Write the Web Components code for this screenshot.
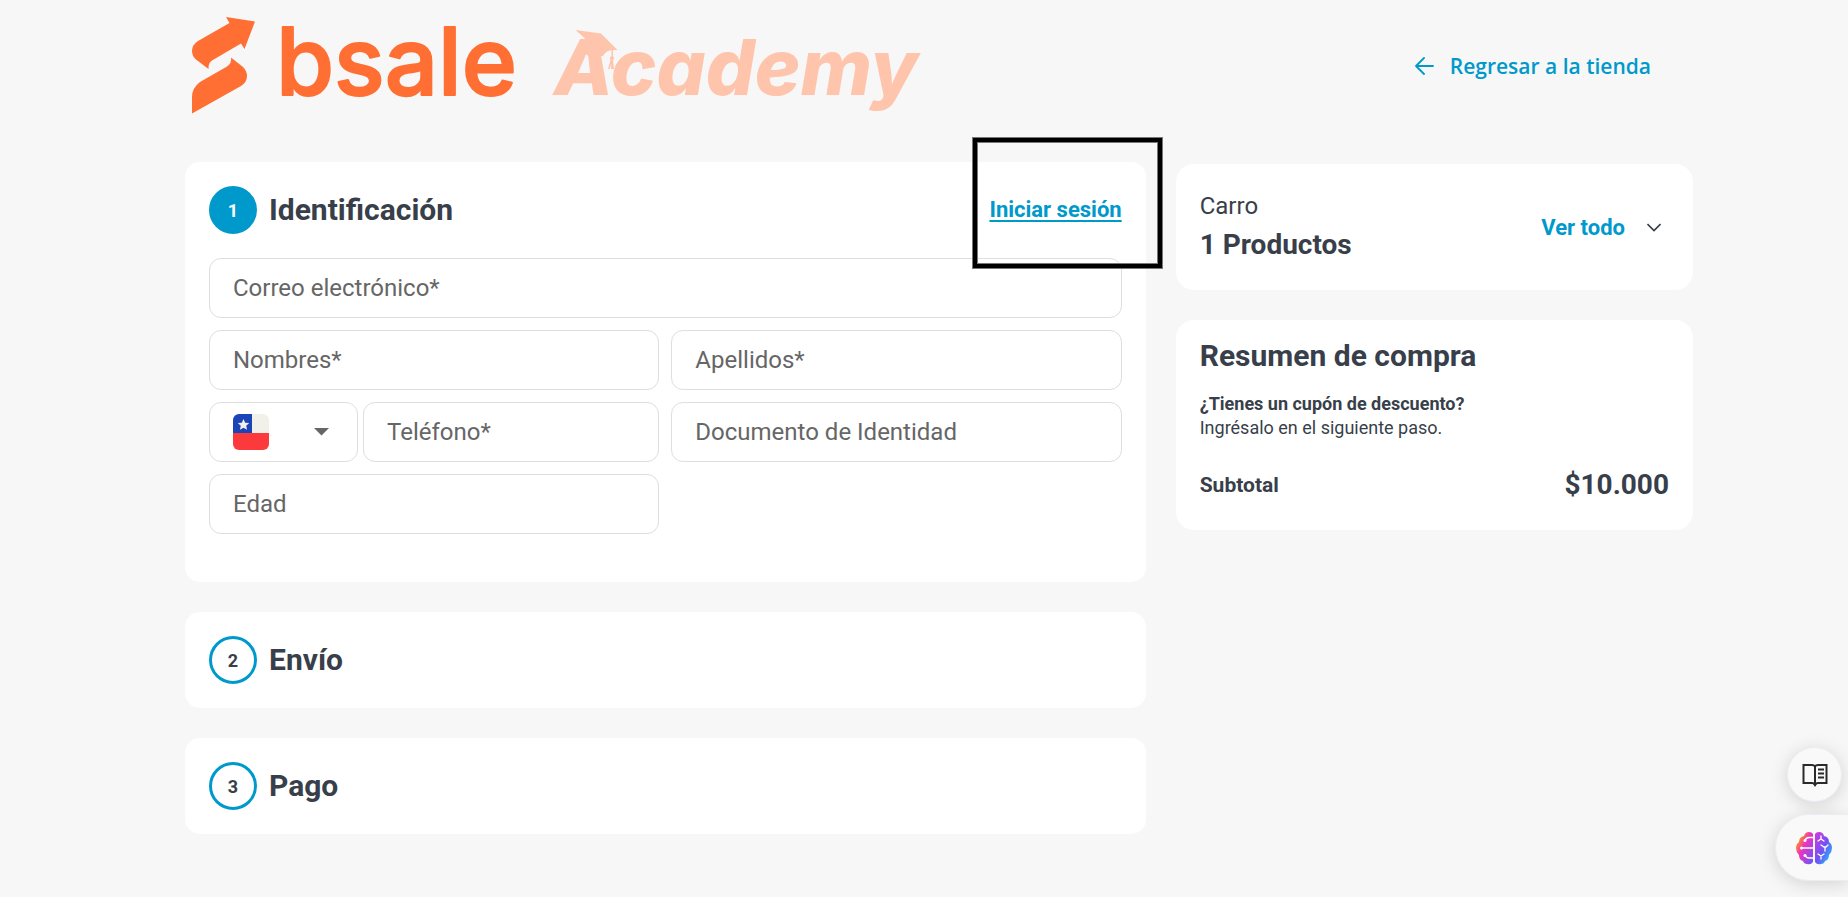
<!DOCTYPE html>
<html lang="es">
<head>
<meta charset="utf-8">
<meta name="viewport" content="width=device-width, initial-scale=1">
<title>Checkout</title>
<style>
:root {
  --accent: #0099cc;
  --ink: #383f4a;
  --muted: #666;
  --line: #dedede;
}

body {
  margin: 0;
  min-height: 100vh;
  background: #f7f7f7;
  color: var(--ink);
  font-family: Roboto, "Liberation Sans", sans-serif;
}
</style>
</head>
<body>
<checkout-page>
  <store-logo slot="brand"></store-logo>
  <back-link slot="back" href="#tienda">Regresar a la tienda</back-link>

  <step-card number="1" heading="Identificación" active>
    <session-link slot="action" href="#login">Iniciar sesión</session-link>
    <field-grid>
      <text-field class="wide" type="email" label="Correo electrónico*"></text-field>
      <text-field label="Nombres*"></text-field>
      <text-field label="Apellidos*"></text-field>
      <phone-field label="Teléfono*"></phone-field>
      <text-field label="Documento de Identidad"></text-field>
      <text-field label="Edad"></text-field>
    </field-grid>
  </step-card>
  <step-card number="2" heading="Envío"></step-card>
  <step-card number="3" heading="Pago"></step-card>

  <cart-card slot="side" count="1"></cart-card>
  <order-summary slot="side" amount="$10.000"></order-summary>
</checkout-page>
<help-dock></help-dock>

<script>
// attaches a shadow root filled with the given markup
function render(el, html) {
  const template = document.createElement('template');
  template.innerHTML = html;
  const shadow = el.attachShadow({ mode: 'open' });
  shadow.appendChild(template.content.cloneNode(true));
  return shadow;
}

class CheckoutPage extends HTMLElement {
  constructor() {
    super();
    render(this, `
<style>
:host {
  display: block;
  padding: 0 155px 60px 185px;
}

header {
  display: flex;
  align-items: center;
  justify-content: space-between;
  padding-right: 42px;
  margin-bottom: 30px;
}

.columns {
  display: grid;
  grid-template-columns: minmax(0, 65fr) minmax(0, 35fr);
  gap: 30px;
  align-items: start;
}

main, aside {
  display: flex;
  flex-direction: column;
  gap: 30px;
}

aside {
  padding-top: 2px;
}

@media (max-width: 1200px) {
  :host { padding: 0 24px 48px; }
  .columns { grid-template-columns: minmax(0, 1fr); }
}
</style>
<header>
  <slot name="brand"></slot>
  <slot name="back"></slot>
</header>
<div class="columns">
  <main><slot></slot></main>
  <aside><slot name="side"></slot></aside>
</div>`);
  }
}

class StoreLogo extends HTMLElement {
  constructor() {
    super();
    render(this, `
<style>
:host { display: block; }
svg { display: block; }
.bsale {
  font: 500 94px Inter, sans-serif;
  fill: #ff6f33;
  stroke: #ff6f33;
  stroke-width: 2;
  stroke-linejoin: round;
}
.academy {
  font: italic 800 77px Inter, sans-serif;
  fill: #ffc4ac;
}
</style>
<svg width="745" height="132" viewBox="185 0 745 132" role="img" aria-label="bsale Academy">
  <g fill="#ff6f33">
    <path d="M226 17 255 21.500 244.500 49 241 43.500 212 60.500Q208 63 208.500 69L196 59.500Q192 56 192 51Q192 45 198 41L229.500 23Z"/>
    <path d="M231 57.500 243 67Q247 71 247 76Q247 82 241 86L192 113.500V97Q192 88 200 82L227 66.500Q232 63 231 57.500Z"/>
  </g>
  <text class="bsale" x="276" y="95">bsale</text>
  <text class="academy" x="554" y="95">Academy</text>
  <g fill="#ffc4ac">
    <path d="M575.500 30 601 33.500 617.500 50H613Q606 50 603 56L590 57 578 49 585 38.500Z"/>
    <path d="M611.500 50H613V56Q615 58 613 60L614 69H611L611.500 64 609.500 69H608L610.500 60Q609 57 611.500 56Z"/>
  </g>
</svg>`);
  }
}

class BackLink extends HTMLElement {
  constructor() {
    super();
    const shadow = render(this, `
<style>
:host { display: block; }
a {
  display: flex;
  align-items: center;
  gap: 16px;
  color: var(--accent);
  font: 600 21px "Open Sans", "Noto Sans", sans-serif;
  text-decoration: none;
  white-space: nowrap;
}
</style>
<a>
  <svg width="19" height="18" viewBox="0 0 19 18" fill="none" stroke="currentColor" stroke-width="1.800" stroke-linecap="round" stroke-linejoin="round" aria-hidden="true">
    <path d="M18 9H1M9 1 1 9l8 8"/>
  </svg>
  <span><slot></slot></span>
</a>`);
    shadow.querySelector('a').href = this.getAttribute('href');
  }
}

class StepCard extends HTMLElement {
  constructor() {
    super();
    const shadow = render(this, `
<style>
:host {
  display: block;
  padding: 24px;
  border-radius: 15px;
  background: #fff;
}

:host([active]) {
  padding-bottom: 48px;
}

.head {
  display: flex;
  align-items: center;
  gap: 12px;
}

.number {
  display: grid;
  place-items: center;
  box-sizing: border-box;
  width: 48px;
  height: 48px;
  border: 3px solid var(--accent);
  border-radius: 50%;
  font-size: 18px;
  font-weight: 700;
}

:host([active]) .number {
  background: var(--accent);
  color: #fff;
}

h2 {
  flex: 1;
  margin: 0;
  font-size: 30px;
  font-weight: 700;
  line-height: 36px;
}
</style>
<div class="head">
  <span class="number"></span>
  <h2></h2>
  <slot name="action"></slot>
</div>
<slot></slot>`);
    shadow.querySelector('.number').textContent = this.getAttribute('number');
    shadow.querySelector('h2').textContent = this.getAttribute('heading');
  }
}

class SessionLink extends HTMLElement {
  constructor() {
    super();
    const shadow = render(this, `
<style>
:host {
  display: block;
  position: relative;
}

a {
  color: var(--accent);
  font-size: 22px;
  font-weight: 700;
  line-height: 26px;
  text-decoration: underline;
  text-underline-offset: 3px;
  text-decoration-thickness: 2px;
}

/* highlight box drawn over the link and the card corner */
.mark {
  position: absolute;
  inset: -59px -40px -45px -16px;
  border: 4px solid #000;
  outline: 1px solid #777;
  box-shadow: inset 0 0 0 1px #777;
  pointer-events: none;
}
</style>
<a><slot></slot></a>
<span class="mark"></span>`);
    shadow.querySelector('a').href = this.getAttribute('href');
  }
}

class FieldGrid extends HTMLElement {
  constructor() {
    super();
    render(this, `
<style>
:host { display: block; }
form {
  display: grid;
  grid-template-columns: minmax(0, 1fr) minmax(0, 1fr);
  gap: 12px;
  margin-top: 24px;
}
::slotted(.wide) { grid-column: 1 / -1; }
</style>
<form><slot></slot></form>`);
  }
}

class TextField extends HTMLElement {
  constructor() {
    super();
    const shadow = render(this, `
<style>
:host {
  display: grid;
  min-width: 0;
}

label, input {
  grid-area: 1 / 1;
}

label {
  align-self: center;
  padding: 0 24px;
  color: var(--muted);
  font-size: 24px;
  line-height: 36px;
  white-space: nowrap;
  overflow: hidden;
  pointer-events: none;
  z-index: 1;
}

input {
  box-sizing: border-box;
  width: 100%;
  height: 60px;
  padding: 0 24px;
  border: 1px solid var(--line);
  border-radius: 12px;
  background: #fff;
  color: var(--ink);
  font: 24px Roboto, sans-serif;
}

input:focus {
  outline: none;
  border-color: var(--accent);
}

/* the label gives way to the typed value */
input:not(:placeholder-shown) + label {
  visibility: hidden;
}
</style>
<input id="field" placeholder=" ">
<label for="field"></label>`);
    shadow.querySelector('input').type = this.getAttribute('type') || 'text';
    shadow.querySelector('label').textContent = this.getAttribute('label');
  }
}

class PhoneField extends HTMLElement {
  constructor() {
    super();
    const shadow = render(this, `
<style>
:host {
  display: grid;
  grid-template-columns: 149px minmax(0, 1fr);
  gap: 5px;
}

.country {
  display: grid;
}

select, .face {
  grid-area: 1 / 1;
}

select {
  appearance: none;
  box-sizing: border-box;
  width: 100%;
  height: 60px;
  border: 1px solid var(--line);
  border-radius: 12px;
  background: #fff;
  cursor: pointer;
}

.face {
  display: flex;
  align-items: center;
  justify-content: space-between;
  padding: 0 29px 0 24px;
  pointer-events: none;
  z-index: 1;
}
</style>
<div class="country">
  <select aria-label="País"><option value="CL" aria-label="Chile"></option></select>
  <div class="face">
    <svg width="36" height="36" viewBox="0 0 36 36" aria-hidden="true">
      <clipPath id="round"><rect width="36" height="36" rx="6"/></clipPath>
      <g clip-path="url(#round)">
        <path fill="#f1f1ea" d="M0 0h36v19H0z"/>
        <path fill="#1a44b8" d="M0 0h19v19H0z"/>
        <path fill="#fc3a3b" d="M0 19h36v17H0z"/>
        <path fill="#f1f1ea" d="m10.500 5 1.700 3.700 4 .4-3 2.700.9 4-3.600-2.100-3.600 2.100.9-4-3-2.700 4-.4z"/>
      </g>
    </svg>
    <svg width="15" height="8" viewBox="0 0 15 8" aria-hidden="true"><path fill="#666" d="M0 0h15L7.500 7.500z"/></svg>
  </div>
</div>
<text-field></text-field>`);
    const field = document.createElement('template');
    field.innerHTML = `<text-field type="tel" label="${this.getAttribute('label')}"></text-field>`;
    shadow.querySelector('text-field').replaceWith(document.importNode(field.content, true));
  }
}

class CartCard extends HTMLElement {
  constructor() {
    super();
    const shadow = render(this, `
<style>
:host {
  display: flex;
  align-items: center;
  justify-content: space-between;
  padding: 24px;
  border-radius: 18px;
  background: #fff;
}

p {
  margin: 0;
  font-size: 24px;
  line-height: 36px;
}

h3 {
  margin: 0;
  font-size: 28px;
  font-weight: 700;
  line-height: 42px;
}

button {
  display: flex;
  align-items: center;
  gap: 22px;
  padding: 0 8px 0 0;
  border: 0;
  background: none;
  color: var(--accent);
  font: 700 22px Roboto, sans-serif;
  cursor: pointer;
}

svg { color: var(--ink); }
</style>
<div>
  <p>Carro</p>
  <h3></h3>
</div>
<button type="button">Ver todo
  <svg width="14" height="9" viewBox="0 0 14 9" fill="none" stroke="currentColor" stroke-width="1.600" aria-hidden="true"><path d="m.5 1 6.500 6.500L13.500 1"/></svg>
</button>`);
    shadow.querySelector('h3').textContent = this.getAttribute('count') + ' Productos';
  }
}

class OrderSummary extends HTMLElement {
  constructor() {
    super();
    const shadow = render(this, `
<style>
:host {
  display: block;
  padding: 18px 24px 24px;
  border-radius: 18px;
  background: #fff;
}

h2, p {
  margin: 0;
}

h2 {
  margin-bottom: 18px;
  font-size: 30px;
  font-weight: 700;
  line-height: 36px;
}

p {
  font-size: 18px;
  line-height: 24px;
}

.total {
  display: flex;
  align-items: center;
  justify-content: space-between;
  margin-top: 24px;
  font-size: 21px;
  font-weight: 700;
  line-height: 42px;
}

.amount { font-size: 28px; }
</style>
<h2>Resumen de compra</h2>
<p><strong>¿Tienes un cupón de descuento?</strong></p>
<p>Ingrésalo en el siguiente paso.</p>
<div class="total"><span>Subtotal</span><span class="amount"></span></div>`);
    shadow.querySelector('.amount').textContent = this.getAttribute('amount');
  }
}

class HelpDock extends HTMLElement {
  constructor() {
    super();
    render(this, `
<style>
:host {
  position: fixed;
  right: 0;
  bottom: 16px;
  display: flex;
  flex-direction: column;
  align-items: flex-end;
  gap: 12px;
}

button {
  display: grid;
  place-items: center;
  padding: 0;
  border: 1px solid #ececf4;
  background: #f9f9f9;
  box-shadow: 0 3px 18px rgba(0, 0, 0, 0.15);
  cursor: pointer;
}

.reader {
  width: 55px;
  height: 55px;
  margin-right: 6px;
  border-radius: 50%;
}

.brain {
  width: 73px;
  height: 67px;
  padding-left: 4px;
  border-right: 0;
  border-radius: 34px 0 0 34px;
}
</style>
<button type="button" class="reader" aria-label="Modo lectura">
  <svg width="26" height="24" viewBox="0 0 26 24" fill="none" stroke="#2a2a2a" stroke-width="2" aria-hidden="true">
    <path d="M13 3.500Q12 2 10 2H1.500v18H10q2 0 3 1.500Q14 20 16 20h8.500V2H16q-2 0-3 1.500zM13 3.500V21"/>
    <path d="M16 6.500h6M16 10.500h6M16 14.500h6"/>
    <path fill="#2a2a2a" stroke="none" d="M10.500 20h5L13 24z"/>
  </svg>
</button>
<button type="button" class="brain" aria-label="Asistente">
  <svg width="36" height="34" viewBox="0 0 36 34" aria-hidden="true">
    <defs>
      <linearGradient id="left" x1="0" y1="0" x2="1" y2="1">
        <stop offset="0.150" stop-color="#ffa000"/>
        <stop offset="0.450" stop-color="#ee32c0"/>
        <stop offset="1" stop-color="#5b5bff"/>
      </linearGradient>
      <linearGradient id="right" x1="0" y1="0" x2="1" y2="1">
        <stop offset="0.100" stop-color="#c63ddc"/>
        <stop offset="0.500" stop-color="#6f52f5"/>
        <stop offset="0.900" stop-color="#20bcff"/>
      </linearGradient>
    </defs>
    <path fill="url(#left)" d="M17 3v28q-2 3-6 2-3 0-4-3-4-1-4-6-3-3-3-7t3-6q0-5 5-6 1-4 5-4 3 0 4 2z"/>
    <path fill="url(#right)" d="M19 3v28q2 3 6 2 3 0 4-3 4-1 4-6 3-3 3-7t-3-6q0-5-5-6-1-4-5-4-3 0-4 2z"/>
    <g fill="none" stroke="#fff" stroke-width="1.300" stroke-linecap="round">
      <path d="M17 6.500h-4q-3 0-4 3M17 17H6M17 27h-4q-3 0-4-3"/>
      <path d="m22 10 3-2V5M25 8l3 2M25 14l3 2 2 0 2-2M29 16v4M22 23l3 2 3-2M25 25v3"/>
    </g>
    <g fill="#fff"><circle cx="9" cy="9.500" r="1.500"/><circle cx="5.500" cy="17" r="1.500"/><circle cx="9" cy="24.500" r="1.500"/></g>
  </svg>
</button>`);
  }
}

window.customElements.define('text-field', TextField);
window.customElements.define('phone-field', PhoneField);
window.customElements.define('field-grid', FieldGrid);
window.customElements.define('session-link', SessionLink);
window.customElements.define('step-card', StepCard);
window.customElements.define('cart-card', CartCard);
window.customElements.define('order-summary', OrderSummary);
window.customElements.define('store-logo', StoreLogo);
window.customElements.define('back-link', BackLink);
window.customElements.define('checkout-page', CheckoutPage);
window.customElements.define('help-dock', HelpDock);
</script>
</body>
</html>
